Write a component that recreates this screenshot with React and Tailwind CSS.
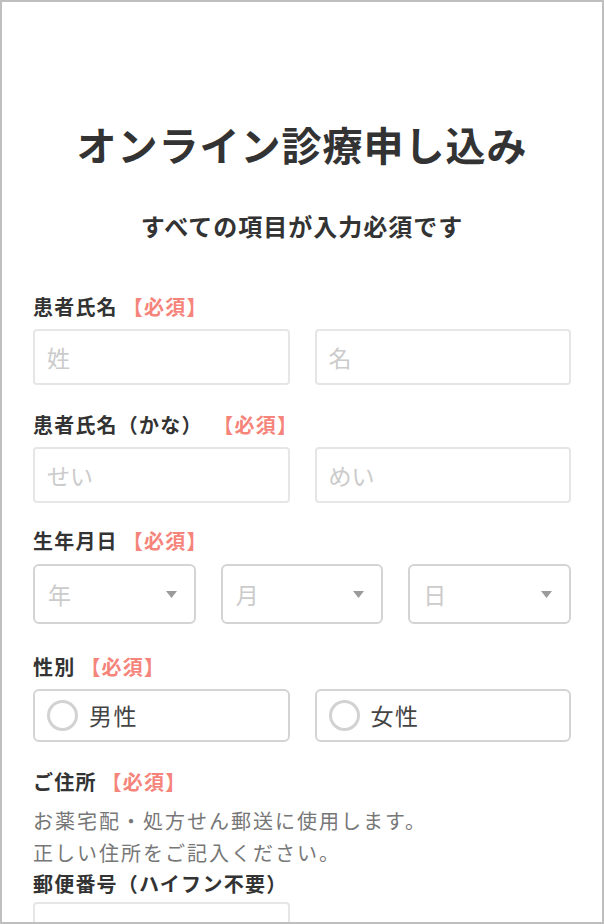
import React from 'react';

const FONT = '"Noto Sans CJK JP", "Noto Sans", sans-serif';

// Red "required" tag after each label
const Required = () => <span className="ml-[5px] text-[#f5847b]">【必須】</span>;

const Label = ({ children, className = '' }) => (
  <div className={`text-[20px] leading-[30px] font-bold tracking-[1.2px] text-[#333] ${className}`}>
    {children}
  </div>
);

const TextBox = ({ placeholder }) => (
  <input
    type="text"
    placeholder={placeholder}
    className="w-full h-[56px] border-2 border-[#e6e6e6] rounded-[4px] px-[12px] text-[23px] text-[#333] placeholder:text-[#cbcbcb] outline-none bg-white"
  />
);

const SelectBox = ({ label }) => (
  <div className="h-[60px] border-2 border-[#d4d4d4] rounded-[6px] flex items-center justify-between pl-[13px] pr-[17px]">
    <span className="text-[23px] text-[#cbcbcb]">{label}</span>
    <svg width="11" height="7" viewBox="0 0 11 7">
      <path d="M0 0h11L5.5 7z" fill="#9b9b9b" />
    </svg>
  </div>
);

const RadioBox = ({ label }) => (
  <div className="h-[53px] border-2 border-[#d4d4d4] rounded-[6px] flex items-center pl-[12px] gap-[11px]">
    <div className="w-[31px] h-[31px] rounded-full border-[3px] border-[#d2d2d2]" />
    <span className="text-[23px] tracking-[1.5px] text-[#444]">{label}</span>
  </div>
);

export default function App() {
  return (
    <div className="w-[604px] h-[924px] overflow-hidden border-2 border-[#bfbfbf] bg-white" style={{ fontFamily: FONT }}>
      <div className="px-[31px] pt-[114px]">
        <h1 className="text-center text-[40px] leading-[56px] font-bold tracking-[1px] text-[#333]">
          オンライン診療申し込み
        </h1>
        <p className="mt-[37px] text-center text-[24px] leading-[34px] font-bold tracking-[1px] text-[#333]">
          すべての項目が入力必須です
        </p>

        <Label className="mt-[49px]">
          患者氏名<Required />
        </Label>
        <div className="mt-[7px] grid grid-cols-2 gap-[25px]">
          <TextBox placeholder="姓" />
          <TextBox placeholder="名" />
        </div>

        <Label className="mt-[25px]">
          患者氏名（かな） <Required />
        </Label>
        <div className="mt-[7px] grid grid-cols-2 gap-[25px]">
          <TextBox placeholder="せい" />
          <TextBox placeholder="めい" />
        </div>

        <Label className="mt-[23px]">
          生年月日<Required />
        </Label>
        <div className="mt-[8px] grid grid-cols-3 gap-[25px]">
          <SelectBox label="年" />
          <SelectBox label="月" />
          <SelectBox label="日" />
        </div>

        <Label className="mt-[28px]">
          性別<Required />
        </Label>
        <div className="mt-[7px] grid grid-cols-2 gap-[25px]">
          <RadioBox label="男性" />
          <RadioBox label="女性" />
        </div>

        <Label className="mt-[25px]">
          ご住所<Required />
        </Label>
        <p className="mt-[8px] text-[20px] leading-[32px] tracking-[2px] text-[#777]">
          お薬宅配・処方せん郵送に使用します。
          <br />
          正しい住所をご記入ください。
        </p>
        <Label>郵便番号（ハイフン不要）</Label>
        <div className="mt-[3px] grid grid-cols-2 gap-[25px]">
          <TextBox placeholder="1234567" />
        </div>
      </div>
    </div>
  );
}
